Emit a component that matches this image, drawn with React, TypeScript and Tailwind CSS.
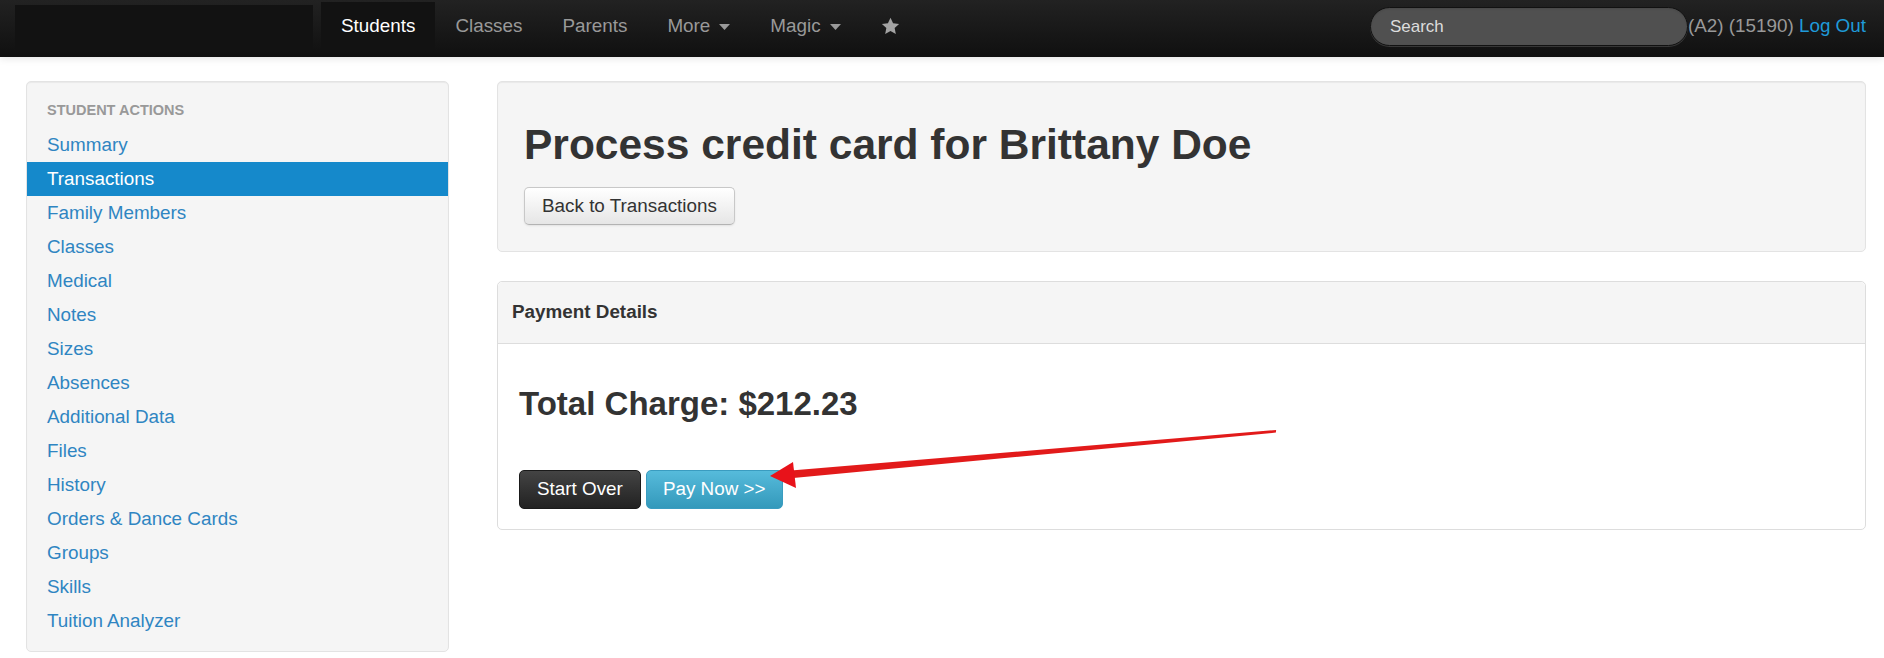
import React from "react";

const items = [
  "Summary",
  "Transactions",
  "Family Members",
  "Classes",
  "Medical",
  "Notes",
  "Sizes",
  "Absences",
  "Additional Data",
  "Files",
  "History",
  "Orders & Dance Cards",
  "Groups",
  "Skills",
  "Tuition Analyzer",
];

function Caret() {
  return (
    <svg width="11" height="6" viewBox="0 0 11 6" className="ml-[9px] mt-[1px]">
      <polygon points="0,0 11,0 5.5,6" fill="#999999" />
    </svg>
  );
}

function Star() {
  return (
    <svg width="19" height="18" viewBox="0 0 24 23" className="mt-[-1px]">
      <path
        d="M12 0.8l3.3 7.1 7.7 0.9-5.7 5.3 1.5 7.7L12 17.9l-6.8 3.9 1.5-7.7L1 8.8l7.7-0.9z"
        fill="#a3a3a3"
      />
    </svg>
  );
}

export default function App() {
  return (
    <div className="relative min-h-[658px] w-full bg-white font-['Liberation_Sans',Arial,Helvetica,sans-serif] text-[18.85px] text-[#333333]">
      {/* NAVBAR */}
      <nav className="flex h-[57px] items-start bg-gradient-to-b from-[#222222] to-[#101010] pl-[15px] shadow-[0_1px_8px_rgba(0,0,0,0.12)]">
        <div className="mt-[5px] h-[45px] w-[298px] bg-[#121212]" />
        <ul className="ml-[8px] flex items-start">
          <li className="mt-[2px] flex h-[48px] items-center bg-[#121212] px-[20px] text-white">
            Students
          </li>
          <li className="flex h-[52px] items-center px-[20px] text-[#999999]">Classes</li>
          <li className="flex h-[52px] items-center px-[20px] text-[#999999]">Parents</li>
          <li className="flex h-[52px] items-center px-[20px] text-[#999999]">
            More
            <Caret />
          </li>
          <li className="flex h-[52px] items-center px-[20px] text-[#999999]">
            Magic
            <Caret />
          </li>
          <li className="flex h-[52px] items-center px-[20px] text-[#999999]">
            <Star />
          </li>
        </ul>
        <div className="ml-auto flex items-start pr-[18px]">
          <div className="mt-[7px] flex h-[39px] w-[318px] items-center rounded-full border border-[#111111] bg-[#505050] pl-[19px] text-[17px] text-[#dddddd] shadow-[inset_0_1px_2px_rgba(0,0,0,0.1),0_1px_0_rgba(255,255,255,0.15)]">
            Search
          </div>
          <div className="flex h-[52px] items-center whitespace-pre">
            <span className="text-[#999999]">(A2) (15190) </span>
            <span className="text-[#1f9ad8]">Log Out</span>
          </div>
        </div>
      </nav>

      {/* BODY */}
      <div className="flex items-start gap-[48px] pl-[26px] pr-[18px] pt-[24px]">
        {/* Sidebar */}
        <aside className="w-[423px] shrink-0 rounded-[5px] border border-[#e3e3e3] bg-[#f5f5f5] pb-[13px] pt-[12px] shadow-[inset_0_1px_1px_rgba(0,0,0,0.05)]">
          <div className="flex h-[34px] items-center pl-[20px] text-[14.5px] font-bold text-[#999999]">
            STUDENT ACTIONS
          </div>
          {items.map((it) => (
            <div
              key={it}
              className={
                it === "Transactions"
                  ? "flex h-[34px] items-center bg-[#1589cb] pl-[20px] text-white"
                  : "flex h-[34px] items-center pl-[20px] text-[#2f85c2]"
              }
            >
              {it}
            </div>
          ))}
        </aside>

        {/* Main */}
        <main className="min-w-0 flex-1">
          <div className="mb-[29px] rounded-[5px] border border-[#e3e3e3] bg-[#f5f5f5] px-[26px] pb-[26px] pt-[36px] shadow-[inset_0_1px_1px_rgba(0,0,0,0.05)]">
            <h2 className="mb-[15px] text-[42.5px] font-bold leading-[54px] text-[#333333]">
              Process credit card for Brittany Doe
            </h2>
            <button className="h-[38px] rounded-[5px] border border-[#c8c8c8] border-b-[#b3b3b3] bg-gradient-to-b from-white to-[#e6e6e6] px-[17px] text-[18.85px] text-[#333333] shadow-[inset_0_1px_0_rgba(255,255,255,0.2),0_1px_2px_rgba(0,0,0,0.08)]">
              Back to Transactions
            </button>
          </div>

          <div className="rounded-[5px] border border-[#dddddd] bg-white">
            <div className="flex h-[62px] items-center rounded-t-[5px] border-b border-[#dddddd] bg-[#f5f5f5] pl-[14px] font-bold">
              Payment Details
            </div>
            <div className="px-[21px] pb-[20px] pt-[20px]">
              <h3 className="mb-[39px] mt-[13px] text-[33px] font-bold leading-[54px] text-[#333333]">
                Total Charge: $212.23
              </h3>
              <div className="flex gap-[5px]">
                <button className="h-[39px] rounded-[5px] border border-[#1a1a1a] bg-gradient-to-b from-[#444444] to-[#222222] px-[17px] text-white">
                  Start Over
                </button>
                <button className="h-[39px] rounded-[5px] border border-[#3a9cc0] bg-gradient-to-b from-[#56bbdb] to-[#3399bb] px-[16px] text-white">
                  Pay Now &gt;&gt;
                </button>
              </div>
            </div>
          </div>
        </main>
      </div>

      {/* Red annotation arrow */}
      <svg
        className="pointer-events-none absolute left-0 top-0"
        width="1884"
        height="658"
        viewBox="0 0 1884 658"
      >
        <polygon
          points="791,470.6 1276.1,430 1275.9,432.6 790.6,478.2"
          fill="#e21a1a"
        />
        <polygon points="770,476 793,462 796,488" fill="#e8121a" />
      </svg>
    </div>
  );
}
